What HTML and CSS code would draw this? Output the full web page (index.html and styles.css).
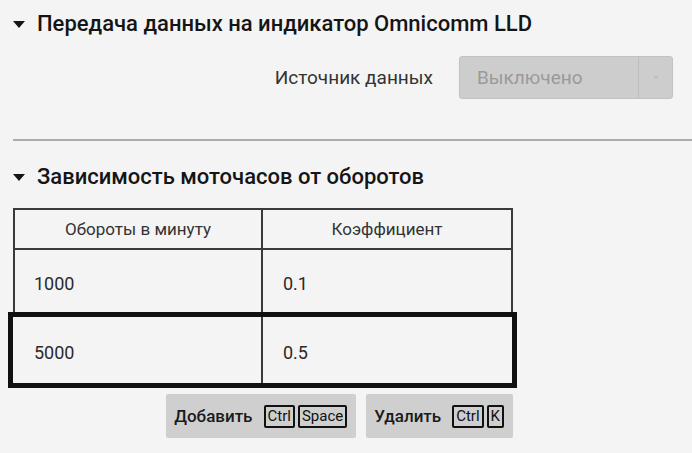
FILE: index.html
```html
<!DOCTYPE html>
<html lang="ru">
<head>
<meta charset="utf-8">
<link rel="stylesheet" href="styles.css">
</head>
<body>
<div class="page">
  <div class="section-head head-1"><span class="caret"></span><span>Передача данных на индикатор Omnicomm LLD</span></div>
  <div class="form-row">
    <span class="label">Источник данных</span>
    <div class="select">
      <span class="select-value">Выключено</span>
      <span class="select-btn"><span class="select-arrow"></span></span>
    </div>
  </div>
  <div class="divider"></div>
  <div class="section-head head-2"><span class="caret"></span><span>Зависимость моточасов от оборотов</span></div>
  <div class="table">
    <div class="row row-head">
      <div class="cell cell-first">Обороты в минуту</div>
      <div class="cell">Коэффициент</div>
    </div>
    <div class="row row-body">
      <div class="cell cell-first">1000</div>
      <div class="cell">0.1</div>
    </div>
    <div class="row row-body row-selected">
      <div class="cell cell-first">5000</div>
      <div class="cell">0.5</div>
    </div>
  </div>
  <div class="actions">
    <button class="btn">Добавить <span class="keys"><kbd>Ctrl</kbd><kbd>Space</kbd></span></button>
    <button class="btn">Удалить <span class="keys"><kbd>Ctrl</kbd><kbd>K</kbd></span></button>
  </div>
</div>
</body>
</html>
```

FILE: styles.css
```css
html, body {
  margin: 0;
  padding: 0;
  background: #f4f4f4;
}
body {
  font-family: Roboto, "Liberation Sans", sans-serif;
  color: #222;
  width: 692px;
  height: 453px;
  overflow: hidden;
}
.page {
  padding-left: 13px;
}
.section-head {
  display: flex;
  align-items: center;
  gap: 12px;
  font-size: 22px;
  font-weight: 500;
  line-height: 26px;
  height: 26px;
  color: #151515;
}
.head-1 {
  padding-top: 11px;
}
.head-2 {
  margin-top: 23px;
}
.caret {
  width: 0;
  height: 0;
  border-left: 6px solid transparent;
  border-right: 6px solid transparent;
  border-top: 7px solid #151515;
  margin-top: 0;
}
.form-row {
  display: flex;
  justify-content: flex-end;
  align-items: center;
  gap: 26px;
  margin-top: 19px;
  padding-right: 19px;
  height: 43px;
}
.label {
  font-size: 19px;
  color: #333;
}
.select {
  width: 214px;
  height: 43px;
  box-sizing: border-box;
  display: flex;
  background: #cdcdcd;
  border: 1px solid #c2c2c2;
  border-radius: 3px;
}
.select-value {
  flex: 1;
  display: flex;
  align-items: center;
  padding-left: 17px;
  font-size: 19px;
  color: #9a9a9a;
}
.select-btn {
  width: 33px;
  border-left: 1px solid #bdbdbd;
  display: flex;
  align-items: center;
  justify-content: center;
}
.select-arrow {
  width: 0;
  height: 0;
  border-left: 3px solid transparent;
  border-right: 3px solid transparent;
  border-top: 3px solid #bcbcbc;
}
.divider {
  margin-top: 40px;
  height: 2px;
  background: #adadad;
}
.table {
  margin-top: 18px;
  width: 500px;
  box-sizing: border-box;
  border: 2px solid #3a3a3a;
}
.row {
  display: grid;
  grid-template-columns: 248px 1fr;
}
.cell {
  display: flex;
  align-items: center;
  padding-left: 19px;
  font-size: 18px;
  color: #2a2a2a;
}
.cell-first {
  border-right: 2px solid #3a3a3a;
}
.cell + .cell {
  padding-left: 20px;
}
.row-head {
  height: 38px;
  border-bottom: 2px solid #3a3a3a;
}
.row-head .cell {
  justify-content: center;
  padding: 0;
  font-size: 17px;
  color: #333;
}
.row-body {
  height: 62px;
}
.row-body .cell {
  padding-top: 4px;
}
.row-selected {
  height: 76px;
  box-sizing: border-box;
  border: 5px solid #111;
  margin: 0 -6px -2px -7px;
  background: #f4f4f4;
  grid-template-columns: 250px 1fr;
}
.row-selected .cell-first {
  padding-left: 21px;
}
.actions {
  width: 500px;
  display: flex;
  justify-content: flex-end;
  gap: 10px;
  margin-top: 6px;
}
.btn {
  display: flex;
  align-items: center;
  gap: 11px;
  height: 44px;
  padding: 0 9px 0 8px;
  border: none;
  border-radius: 2px;
  background: #cfcfcf;
  font-family: Roboto, "Liberation Sans", sans-serif;
  font-size: 17px;
  font-weight: 500;
  color: #1a1a1a;
}
.keys {
  display: flex;
  gap: 3px;
}
kbd {
  font-family: Roboto, "Liberation Sans", sans-serif;
  font-size: 15px;
  font-weight: 400;
  line-height: 19px;
  border: 2px solid #111;
  border-radius: 2px;
  padding: 0 2px;
  color: #111;
}
```
